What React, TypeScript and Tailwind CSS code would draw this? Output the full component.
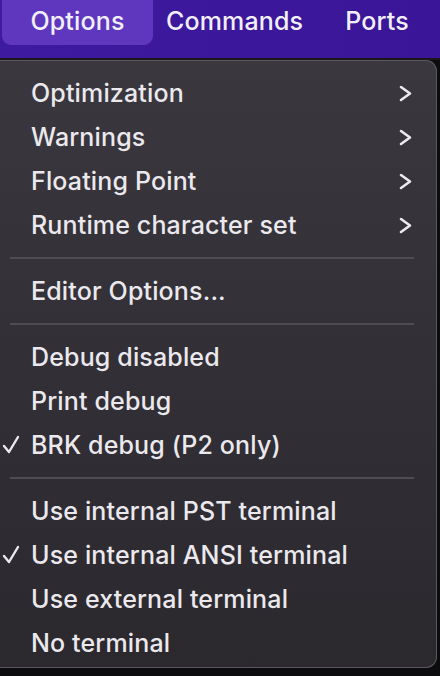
import React from "react";

const font = { fontFamily: "Inter, 'Noto Sans', sans-serif" };

function Chevron() {
  return (
    <svg width="14" height="18" viewBox="0 0 14 18" className="absolute left-[399px] top-[14px]">
      <polyline points="2,2 11,8.5 2,15" fill="none" stroke="#ebe9ee" strokeWidth="2.6" strokeLinecap="round" strokeLinejoin="round" />
    </svg>
  );
}

function Check() {
  return (
    <svg width="20" height="20" viewBox="0 0 20 20" className="absolute left-[1px] top-[12px]">
      <polyline points="3,11 8,17 17,2" fill="none" stroke="#ebe9ee" strokeWidth="2.4" strokeLinecap="round" strokeLinejoin="round" />
    </svg>
  );
}

function Item({ label, sub, checked }: { label: string; sub?: boolean; checked?: boolean }) {
  return (
    <div className="relative h-[44px] flex items-center pl-[31px] text-[25px] font-[450] leading-[44px] text-[#ebe9ee] tracking-[0.15px]">
      {checked && <Check />}
      <span>{label}</span>
      {sub && <Chevron />}
    </div>
  );
}

function Sep() {
  return <div className="my-[10px] ml-[10px] w-[404px] h-[2px] bg-[#4f4d53]" />;
}

export default function App() {
  return (
    <div className="w-[440px] h-[676px] bg-[#0c0c0e] overflow-hidden flex flex-col" style={font}>
      <div className="h-[58px] shrink-0 bg-gradient-to-r from-[#3d1aa0] to-[#3a1597] flex items-start text-[25px] font-[450] tracking-[0.15px] text-[#f1eff7]">
        <div className="ml-[2px] w-[151px] h-[45px] rounded-b-[9px] bg-[#5f37be] flex items-center justify-center pb-[2px]">
          Options
        </div>
        <div className="ml-[13px] h-[45px] flex items-center pb-[2px]">Commands</div>
        <div className="ml-[42px] h-[45px] flex items-center pb-[2px]">Ports</div>
      </div>
      <div className="h-[2px] shrink-0 bg-[#19171c]" />
      <div className="w-[437px] h-[608px] shrink-0 rounded-tr-[11px] rounded-br-[11px] border-t border-r border-b border-[#5a585e] bg-gradient-to-b from-[#3a383e] via-[#323036] to-[#2b292e] pt-[10px]">
        <Item label="Optimization" sub />
        <Item label="Warnings" sub />
        <Item label="Floating Point" sub />
        <Item label="Runtime character set" sub />
        <Sep />
        <Item label="Editor Options..." />
        <Sep />
        <Item label="Debug disabled" />
        <Item label="Print debug" />
        <Item label="BRK debug (P2 only)" checked />
        <Sep />
        <Item label="Use internal PST terminal" />
        <Item label="Use internal ANSI terminal" checked />
        <Item label="Use external terminal" />
        <Item label="No terminal" />
      </div>
    </div>
  );
}
